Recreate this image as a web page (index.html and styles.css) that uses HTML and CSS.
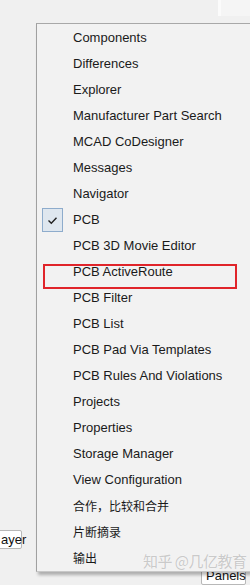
FILE: index.html
```html
<!DOCTYPE html>
<html lang="zh-CN">
<head>
  <meta charset="UTF-8">
  <meta name="viewport" content="width=device-width, initial-scale=1.0">
  <title>Panels</title>
  <link rel="stylesheet" href="styles.css">
</head>
<body>
  <div class="workspace">
    <div class="top-strip">
      <div class="top-left"></div>
      <div class="top-right"></div>
    </div>
    <div class="canvas">
      <div class="layer-row">
        <div class="tab-button layer-tab">ayer</div>
      </div>
      <div class="status-row">
        <div class="tab-button panels-tab">Panels</div>
      </div>
    </div>
  </div>

  <div class="menu">
    <div class="menu-item">Components</div>
    <div class="menu-item">Differences</div>
    <div class="menu-item">Explorer</div>
    <div class="menu-item">Manufacturer Part Search</div>
    <div class="menu-item">MCAD CoDesigner</div>
    <div class="menu-item">Messages</div>
    <div class="menu-item">Navigator</div>
    <div class="menu-item checked">
      <span class="check-box">
        <svg width="11" height="9" viewBox="0 0 11 9"><path d="M1.5 4.5 L4.3 7.2 L9.5 1.8" fill="none" stroke="#222" stroke-width="1.4"/></svg>
      </span>
      PCB
    </div>
    <div class="menu-item">PCB 3D Movie Editor</div>
    <div class="menu-item marked">PCB ActiveRoute<span class="red-box"></span></div>
    <div class="menu-item">PCB Filter</div>
    <div class="menu-item">PCB List</div>
    <div class="menu-item">PCB Pad Via Templates</div>
    <div class="menu-item">PCB Rules And Violations</div>
    <div class="menu-item">Projects</div>
    <div class="menu-item">Properties</div>
    <div class="menu-item">Storage Manager</div>
    <div class="menu-item">View Configuration</div>
    <div class="menu-item cjk">合作，比较和合并</div>
    <div class="menu-item cjk">片断摘录</div>
    <div class="menu-item cjk">输出</div>
  </div>

  <div class="watermark">知乎 @几亿教育</div>
</body>
</html>
```
FILE: styles.css
```css
html, body {
  margin: 0;
  padding: 0;
}
body {
  font-family: "Liberation Sans", Arial, "Noto Sans CJK SC", sans-serif;
  font-size: 13px;
  color: #1a1a1a;
  background-color: #f0f0f0;
  width: 250px;
  height: 585px;
  overflow: hidden;
  position: relative;
}
.workspace {
  display: flex;
  flex-direction: column;
  height: 585px;
}
.top-strip {
  display: flex;
  height: 23px;
}
.top-left {
  width: 218px;
  background-color: #f0f0f0;
}
.top-right {
  flex: 1;
  border-left: 3px solid #fbfbfb;
  background-color: #f5f5f5;
}
.canvas {
  flex: 1;
  display: flex;
  flex-direction: column;
}
.layer-row {
  margin-top: 514px;
  display: flex;
}
.tab-button {
  background-color: #fff;
  border: 1px solid #b8b8b8;
  border-radius: 2px;
  height: 17px;
  line-height: 17px;
  padding: 0 4px;
  font-size: 13px;
  color: #111;
}
.layer-tab {
  margin-left: -8px;
  padding-left: 8px;
  width: 16px;
}
.status-row {
  margin-top: 17px;
  display: flex;
  justify-content: flex-end;
  padding-right: 4px;
}
.panels-tab {
  width: 35px;
}
.menu {
  position: absolute;
  top: 23px;
  left: 36px;
  right: 0;
  background-color: #f2f2f2;
  border-top: 1px solid #a8a8a8;
  border-left: 1px solid #a0a0a0;
  border-bottom: 1px solid #c8c8c8;
  padding: 1px 0 0;
  box-shadow: 2px 3px 3px rgba(0, 0, 0, 0.28);
}
.menu-item {
  position: relative;
  height: 26px;
  line-height: 26px;
  padding-left: 36px;
  white-space: nowrap;
}
.cjk {
  font-family: "Noto Sans CJK SC", sans-serif;
  font-size: 12px;
}
.check-box {
  position: absolute;
  left: 5px;
  top: 1px;
  width: 19px;
  height: 22px;
  border: 1px solid #8eaccc;
  background-color: #dfe7ef;
  display: flex;
  align-items: center;
  justify-content: center;
}
.red-box {
  position: absolute;
  left: 6px;
  top: 5px;
  width: 190px;
  height: 21px;
  border: 2px solid #e0242a;
}
.watermark {
  position: absolute;
  left: 143px;
  top: 550px;
  font-family: "Noto Sans CJK SC", sans-serif;
  font-size: 15px;
  color: rgba(195, 195, 195, 0.9);
  text-shadow: 0 0 1px #fff;
  letter-spacing: -0.5px;
}
```
